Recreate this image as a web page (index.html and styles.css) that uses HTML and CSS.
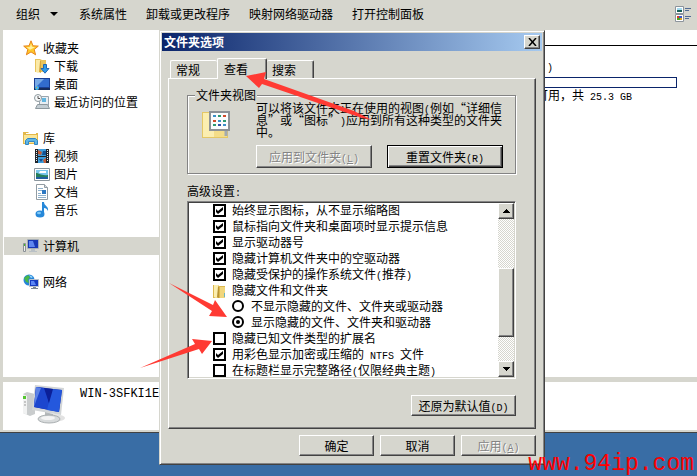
FILE: index.html
```html
<!DOCTYPE html>
<html lang="zh-CN">
<head>
<meta charset="utf-8">
<title>文件夹选项</title>
<link rel="stylesheet" href="styles.css">
</head>
<body>
<main class="explorer">
  <header class="toolbar">
    <button class="tool" type="button">组织 <span class="caret"></span></button>
    <button class="tool" type="button">系统属性</button>
    <button class="tool" type="button">卸载或更改程序</button>
    <button class="tool" type="button">映射网络驱动器</button>
    <button class="tool" type="button">打开控制面板</button>
    <button class="tool view-mode" type="button" aria-label="更改视图">
      <svg width="16" height="16" viewBox="0 0 16 16"><path fill="#fff" stroke="#8c949c" d="M.5.5h8v7h-8zM.5 8.5h8v7h-8z"/><path fill="#a5dcf0" d="M2 2h5v2H2z"/><path fill="#18605a" d="M2 4h5v2H2z"/><path fill="#d83a28" d="M2 10h2v2H2z"/><path fill="#3b55c4" d="M4 10h3v2H4z"/><path fill="#4ea51e" d="M2 12h3v2H2z"/><path fill="#e2a51c" d="M5 12h2v2H5z"/><path stroke="#526b94" d="M10 2.500h6M10 4.500h4M10 10.500h6M10 12.500h4"/></svg>
    </button>
  </header>
  <div class="panes">
    <nav class="tree">
      <a class="node root" href="#"><svg width="16" height="16" viewBox="0 0 16 16"><path fill="#ffc929" stroke="#e8851d" d="M8 .8l2 5 5.300.300-4.100 3.400 1.400 5.300L8 11.900l-4.600 2.900 1.400-5.300L.7 6.100 6 5.800z"/><path fill="#fff0a0" d="M8 3.500l1 3.300 3 .4-5 2.500-3.500-2.500L7 7z"/></svg>收藏夹</a>
      <a class="node" href="#"><svg width="16" height="16" viewBox="0 0 16 16"><path fill="#e9c45c" d="M1 1h5l2 1h4v12H1z"/><path fill="#fbeaa8" d="M2 2h4v12l-2 1-2-1z"/><path fill="#d6a63b" d="M6 3h1v12l-2-1z"/><path fill="#2f9be8" stroke="#1d66b5" d="M9.500 6.500h3v4h2.500L11 15.200 7 10.500h2.500z"/></svg>下载</a>
      <a class="node" href="#"><svg width="16" height="16" viewBox="0 0 16 16"><path fill="#1b3f94" d="M0 2h16v12H0z"/><path fill="#326cce" d="M1 3h14v8H1z"/><path fill="#78aae6" d="M1 3h9L2 11H1z"/><path fill="#162c5c" d="M0 12h16v2H0z"/><circle cx="3" cy="12" r="2" fill="#43b9e8"/><path fill="#f3933a" d="M2 11h1v1H2z"/></svg>桌面</a>
      <a class="node" href="#"><svg width="16" height="16" viewBox="0 0 16 16"><path fill="#e8eef3" stroke="#9aa5ae" d="M5.500 2.500h9v9h-9z"/><path fill="#63b6df" d="M8 4h4v4H8z"/><path fill="#c3cdd3" stroke="#8d989e" d="M3.500 10.500h10l2 4h-14z"/><circle cx="4" cy="4" r="3.500" fill="#f7f9fa" stroke="#8d989e"/><path stroke="#555" fill="none" d="M4 2v2.500h2"/></svg>最近访问的位置</a>
      <a class="node root section" href="#"><svg width="16" height="16" viewBox="0 0 16 16"><path fill="#e3b84a" d="M0 2h5l1 1h9v11H0z"/><path fill="#f9e597" d="M1 5h13v8H1z"/><path fill="#fff" d="M3 3h10v1H3z"/><path fill="#5eb5e5" stroke="#3086c4" d="M2.500 14.500v-4l2-2h8l2 2v4h-3v-3h-6v3z"/></svg>库</a>
      <a class="node" href="#"><svg width="16" height="16" viewBox="0 0 16 16"><path fill="#20252b" d="M1 1h14v14H1z"/><path fill="#3d9ddc" d="M4 1h8v7H4zM4 9h8v6H4z"/><path fill="#c25c37" d="M4 2l4 2-1 3-3-1zM12 10l-3 2 1 3h2z"/><path fill="#145292" d="M9 3h3v4H8zM5 11h4l-2 3z"/><path stroke="#eee" stroke-dasharray="1 1" d="M2.500 2v12M13.500 2v12"/></svg>视频</a>
      <a class="node" href="#"><svg width="16" height="16" viewBox="0 0 16 16"><path fill="#fff" stroke="#8b969e" d="M.5 2.500h15v12H.5z"/><path fill="#79c6ec" d="M2 4h12v9H2z"/><path fill="#fff" d="M6 5h6v2H5z"/><path fill="#267f5b" d="M2 7c3 0 5 3 12 2v4H2z"/><path fill="#1f5fa0" d="M2 11h12v2H2z"/></svg>图片</a>
      <a class="node" href="#"><svg width="16" height="16" viewBox="0 0 16 16"><path fill="#fff" stroke="#929ca3" d="M2.500.5h8l3 3v12h-11z"/><path fill="#d5dce1" stroke="#929ca3" d="M10.500.5v3h3"/><path stroke="#8fb1cc" d="M4 4.500h5M4 6.500h4M4 9.500h3M4 11.500h8M4 13.500h8"/><path fill="#2d78c2" d="M8 6h4v4H8z"/></svg>文档</a>
      <a class="node" href="#"><svg width="16" height="16" viewBox="0 0 16 16"><path fill="#2688d9" d="M8 0h2c0 4 5 4 4 9-1-2-2-3-4-3v6H8z"/><ellipse cx="6" cy="12" rx="4.500" ry="3.500" fill="#2688d9"/><ellipse cx="5" cy="11" rx="2" ry="1.200" fill="#80c9f6"/></svg>音乐</a>
      <a class="node root section selected" href="#"><svg width="16" height="16" viewBox="0 0 16 16"><path fill="#eee" stroke="#8a9196" d="M.5 5.500h2v8h-2z"/><path fill="#4ab92b" d="M1 6h1v2H1z"/><path fill="#dfe4e8" stroke="#a5adb5" d="M4.500 1.500h11v9h-11z"/><path fill="#1737b5" d="M5 2h10v8H5z"/><path fill="#5e86ef" d="M6 3h4l2 6H6z"/><path fill="#b9c0c5" d="M8 11h4v2h2v1H6v-1h2z"/></svg>计算机</a>
      <a class="node root section" href="#"><svg width="16" height="16" viewBox="0 0 16 16"><circle cx="6" cy="6" r="5.500" fill="#2584da"/><path fill="#49b848" d="M1 4l4-3 2 2-2 3 1 3-3-1z"/><path fill="#a5e1fa" d="M6 1l4 2-2 1z"/><path fill="#163bc0" stroke="#b9c2cc" d="M6.500 5.500h9v7h-9z"/><path fill="#5b87f5" d="M8 7h3l2 4H8z"/><path fill="#7b8791" d="M10 13h3v1h2v1H8v-1h2z"/></svg>网络</a>
    </nav>
    <section class="drives">
      <div class="drive-name"><span class="latin">)</span></div>
      <div class="capacity"></div>
      <div class="free">可用，共<span class="latin"> 25.3 GB</span></div>
    </section>
  </div>
  <footer class="details">
    <svg width="44" height="40" viewBox="0 0 44 40"><ellipse cx="30" cy="34" rx="13" ry="4" fill="#e2e2e2"/><path fill="#c9cccd" d="M1 10l4-2 8 2v20l-5 2-7-3z"/><path fill="#f1f2f2" d="M1 10l4 2v19l-4-2z"/><path fill="#54c62f" d="M1 12h3v3H1z"/><path stroke="#999" d="M2 18h2M2 21h2"/><path fill="#d2d5d7" d="M13 1l29 3-3 27-29-5z"/><path fill="#0d24a5" d="M14 3l26 3-3 22-25-5z"/><path fill="#1c46cf" d="M14 3l10 1 4 22-16-3z"/><path fill="#5c82e6" d="M14 3l5 1-5 13-2 6z"/><path fill="#2458dd" d="M30 5l10 1-3 22-12-2z"/><path fill="#0b1f98" d="M22 4l9 1-4 14z"/><path fill="#b5b9bb" d="M23 28l8 2v4h-8z"/><ellipse cx="27" cy="35" rx="11" ry="4" fill="#d8dbdc" stroke="#aaafb1"/><ellipse cx="26" cy="34" rx="7" ry="2" fill="#f4f4f4"/></svg>
    <span class="host">WIN-3SFKI1EG</span>
  </footer>
</main>

<div class="dialog" role="dialog" aria-labelledby="dialog-title">
  <div class="titlebar">
    <span id="dialog-title">文件夹选项</span>
    <button class="close" type="button" aria-label="关闭"><svg width="9" height="8" viewBox="0 0 9 8"><path stroke="#000" stroke-width="1.500" d="M1 0l7 8M8 0L1 8"/></svg></button>
  </div>
  <div class="tabs" role="tablist">
    <button class="tab" type="button" role="tab">常规</button>
    <button class="tab active" type="button" role="tab" aria-selected="true">查看</button>
    <button class="tab" type="button" role="tab">搜索</button>
  </div>
  <div class="page">
    <fieldset class="folder-views">
      <legend>文件夹视图</legend>
      <div class="views-row">
        <svg width="30" height="30" viewBox="0 0 30 30"><path fill="#e4c765" d="M0 2h10l2 1h14v25H0z"/><path fill="#fbeeb0" d="M1 3h12v24H1z"/><path fill="#f4dd88" d="M12 4h13v23H12z"/><path fill="#fafcfd" stroke="#8c9196" stroke-width="2" d="M8 2h19v18H8z"/><path stroke="#3c8fc7" stroke-width="2" d="M11 6h3M16 11h3M21 15h3"/><path stroke="#cf4b2a" stroke-width="2" d="M21 6h3M11 11h3"/><path stroke="#2e9b72" stroke-width="2" d="M16 6h3M11 15h3M21 11h3"/><path stroke="#3450a3" stroke-width="2" d="M16 15h3"/><path stroke="#a3aab0" stroke-width="3" d="M24 21v5"/></svg>
        <div class="views-body">
          <p>可以将该文件夹正在使用的视图<span class="latin">(</span>例如“详细信<br>息”或“图标”<span class="latin">)</span>应用到所有这种类型的文件夹<br>中。</p>
          <div class="views-actions">
            <button class="btn tall" type="button" disabled>应用到文件夹<span class="latin">(<u>L</u>)</span></button>
            <button class="btn tall default" type="button">重置文件夹<span class="latin">(R)</span></button>
          </div>
        </div>
      </div>
    </fieldset>
    <div class="list-label" id="advanced">高级设置<span class="latin">:</span></div>
    <div class="listbox" role="group" aria-labelledby="advanced">
      <div class="rows">
        <label class="row"><input type="checkbox" checked><span>始终显示图标，从不显示缩略图</span></label>
        <label class="row"><input type="checkbox" checked><span>鼠标指向文件夹和桌面项时显示提示信息</span></label>
        <label class="row"><input type="checkbox" checked><span>显示驱动器号</span></label>
        <label class="row"><input type="checkbox" checked><span>隐藏计算机文件夹中的空驱动器</span></label>
        <label class="row"><input type="checkbox" checked><span>隐藏受保护的操作系统文件<span class="latin">(</span>推荐<span class="latin">)</span></span></label>
        <div class="row"><svg width="13" height="15" viewBox="0 0 13 15"><path fill="#dcb84f" d="M0 1h5l1 1h6v12H0z"/><path fill="#fbeeb0" d="M1 1h4v12l-2 1-2-1z"/><path fill="#f1d67c" d="M7 3h5v11H7z"/><path fill="#b99434" d="M5 3h1v11l-2-1z"/><path fill="#6eb4bd" d="M11 9h1v4h-1z"/></svg><span>隐藏文件和文件夹</span></div>
        <label class="row child"><input type="radio" name="hidden"><span>不显示隐藏的文件、文件夹或驱动器</span></label>
        <label class="row child"><input type="radio" name="hidden" checked><span>显示隐藏的文件、文件夹和驱动器</span></label>
        <label class="row"><input type="checkbox"><span>隐藏已知文件类型的扩展名</span></label>
        <label class="row"><input type="checkbox" checked><span>用彩色显示加密或压缩的<span class="latin"> NTFS </span>文件</span></label>
        <label class="row"><input type="checkbox"><span>在标题栏显示完整路径<span class="latin">(</span>仅限经典主题<span class="latin">)</span></span></label>
      </div>
      <div class="scrollbar">
        <button class="arrow" type="button" aria-label="向上"><svg width="7" height="4" viewBox="0 0 7 4"><path d="M3 0h1v1h1v1h1v1h1v1H0V3h1V2h1V1h1z"/></svg></button>
        <div class="track"><div class="thumb"></div></div>
        <button class="arrow" type="button" aria-label="向下"><svg width="7" height="4" viewBox="0 0 7 4"><path d="M0 0h7v1H6v1H5v1H4v1H3V3H2V2H1V1H0z"/></svg></button>
      </div>
    </div>
    <button class="btn restore" type="button">还原为默认值<span class="latin">(D)</span></button>
  </div>
  <div class="actions">
    <button class="btn" type="button">确定</button>
    <button class="btn" type="button">取消</button>
    <button class="btn" type="button" disabled>应用<span class="latin">(<u>A</u>)</span></button>
  </div>
</div>

<svg class="pointers" width="400" height="400" viewBox="0 0 400 400" aria-hidden="true"><path d="M246 76l20-4-2 7 90 32 18 9-10-2L262 84l-3 4zM169 283l44 22 2-5 12 17-18-1 3-5zM140 368l55-24-3-5 20 2-10 13-3-5z"/></svg>
<div class="watermark">www.94ip.com</div>
</body>
</html>
```

FILE: styles.css
```css
:root {
  --face: #d6d6ce;
  --shade: #848484;
  --dark: #424242;
}

* {
  box-sizing: border-box;
}

body {
  margin: 0;
  min-height: 100vh;
  overflow: hidden;
  background: #396da5;
  color: #000;
  font: 12px/14px "Noto Sans CJK SC", sans-serif;
  text-spacing-trim: space-all;
}

button {
  padding: 0;
  border: 0;
  background: none;
  color: inherit;
  font: inherit;
  white-space: nowrap;
}

svg {
  display: block;
  flex: none;
}

input {
  appearance: none;
  flex: none;
  margin: 0;
}

.latin {
  font-family: "Liberation Mono", monospace;
  font-size: 10px;
  line-height: 0;
  white-space: pre;
}

/* Explorer window */
.explorer {
  padding: 0 0 2px 3px;
  border-bottom: 1px solid var(--dark);
  background: var(--face);
}

.toolbar {
  display: flex;
  align-items: center;
  gap: 19px;
  height: 30px;
  padding: 0 6px 2px 13px;
}

.tool {
  display: flex;
  align-items: center;
  gap: 10px;
}

.tool:first-child {
  margin-right: 2px;
}

.view-mode {
  margin-left: auto;
}

.caret {
  border: 4px solid transparent;
  border-top-color: #000;
  border-bottom: 0;
}

.panes {
  display: flex;
  gap: 5px;
  height: 347px;
}

.tree {
  width: 156px;
  padding-top: 9px;
  background: #fff;
}

.node {
  display: flex;
  align-items: center;
  gap: 4px;
  height: 18px;
  margin-left: 1px;
  padding-left: 30px;
  color: inherit;
  text-decoration: none;
}

.root {
  padding-left: 19px;
}

.section {
  margin-top: 18px;
}

.selected {
  background: var(--face);
}

.drives {
  flex: 1;
  padding-top: 15px;
  background: #fff;
}

.drive-name {
  height: 32px;
  padding: 13px 0 0 383px;
  border-top: 1px solid #000;
}

.capacity {
  height: 11px;
  margin-right: 20px;
  border: 1px solid #0a246a;
}

.free {
  padding-left: 372px;
}

.details {
  display: flex;
  gap: 14px;
  margin-top: 5px;
  height: 48px;
  padding: 2px 0 0 19px;
  background: #fff;
}

.host {
  padding-top: 3px;
  font: 12px/14px "Liberation Mono", monospace;
}

/* Folder options dialog */
.dialog {
  position: absolute;
  top: 30px;
  left: 159px;
  width: 386px;
  padding: 2px;
  border: 1px solid;
  border-color: var(--face) var(--dark) var(--dark) var(--face);
  background: var(--face);
  box-shadow: inset 1px 1px #fff, inset -1px -1px var(--shade);
}

.titlebar {
  display: flex;
  align-items: center;
  justify-content: space-between;
  height: 18px;
  padding: 0 2px;
  background: linear-gradient(90deg, #0a246a, #a6caf0);
  color: #fff;
  font-weight: bold;
}

.btn,
.close,
.arrow,
.thumb {
  border: 1px solid;
  border-color: #fff var(--dark) var(--dark) #fff;
  background: var(--face);
  box-shadow: inset -1px -1px var(--shade);
}

.close,
.arrow {
  display: grid;
  place-items: center;
}

.close {
  width: 16px;
  height: 14px;
}

.tabs {
  display: flex;
  align-items: flex-end;
  height: 20px;
  margin: 7px 6px 0;
  padding-left: 2px;
}

.tab {
  width: 47px;
  height: 18px;
  padding-right: 12px;
  border: 1px solid #fff;
  border-width: 1px 0 0 1px;
  border-radius: 2px 2px 0 0;
}

.tab:last-child {
  border-left: 0;
  border-right: 1px solid var(--dark);
  box-shadow: inset -1px 0 var(--shade);
}

.active {
  position: relative;
  width: 50px;
  height: 21px;
  margin-bottom: -1px;
  border-right: 1px solid var(--dark);
  background: var(--face);
  box-shadow: inset -1px 0 var(--shade);
}

.page {
  display: flex;
  flex-direction: column;
  margin: 0 6px;
  padding: 9px 19px 12px 18px;
  border: 1px solid;
  border-color: #fff var(--dark) var(--dark) #fff;
  box-shadow: inset -1px -1px var(--shade);
}

.folder-views {
  min-width: 0;
  margin: 0;
  padding: 0 12px 5px 14px;
  border: 1px solid var(--shade);
  box-shadow: 1px 1px #fff, inset 1px 1px #fff;
}

legend {
  margin-left: -7px;
  padding: 0 1px;
  background: var(--face);
}

.views-row {
  display: flex;
  gap: 24px;
}

.views-row > svg {
  margin-top: 8px;
}

.views-body p {
  margin: 0 0 7px;
  line-height: 12px;
  white-space: nowrap;
}

.views-actions {
  display: flex;
  gap: 15px;
}

.btn {
  width: 75px;
  height: 21px;
}

.btn:disabled {
  color: var(--shade);
  text-shadow: 1px 1px #fff;
}

.tall {
  width: 116px;
  height: 23px;
}

.default {
  border-color: #000;
  box-shadow: inset 1px 1px #fff, inset -1px -1px var(--dark), inset -2px -2px var(--shade);
}

.list-label {
  margin: 10px 0 3px;
}

.listbox {
  display: flex;
  height: 178px;
  padding: 1px;
  border: 1px solid;
  border-color: var(--shade) #fff #fff var(--shade);
  background: #fff;
  box-shadow: inset 1px 1px var(--dark), inset -1px -1px var(--face);
}

.rows {
  flex: 1;
  padding-left: 24px;
}

.row {
  display: flex;
  gap: 6px;
  height: 16px;
  padding-top: 1px;
  line-height: 12px;
  white-space: nowrap;
}

.child {
  padding-left: 19px;
}

.row input {
  width: 13px;
  height: 13px;
  border: 2px solid #000;
}

.row input[type="radio"] {
  width: 12px;
  height: 12px;
  margin-right: 1px;
  border-radius: 50%;
}

.row input:checked::before {
  content: "";
  display: block;
  width: 7px;
  height: 7px;
  margin: 1px;
  background: #000;
  clip-path: polygon(0 2px, 2px 4px, 7px 0, 7px 3px, 2px 7px, 0 5px);
}

.row input[type="radio"]:checked::before {
  width: 4px;
  height: 4px;
  margin: 2px;
  border-radius: 50%;
  clip-path: none;
}

.scrollbar {
  display: flex;
  flex-direction: column;
  width: 16px;
}

.arrow {
  width: 16px;
  height: 16px;
}

.track {
  flex: 1;
  padding-top: 49px;
  background: repeating-conic-gradient(var(--face) 0 25%, #fff 0 50%) 0 0 / 2px 2px;
}

.thumb {
  height: 69px;
}

.restore {
  align-self: flex-end;
  width: 105px;
  margin-top: 16px;
}

.actions {
  display: flex;
  justify-content: flex-end;
  gap: 6px;
  padding: 6px;
}

/* Annotations over the windows */
.pointers {
  position: absolute;
  top: 0;
  left: 0;
  fill: #ff3a33;
  pointer-events: none;
}

.watermark {
  position: absolute;
  right: 3px;
  bottom: 0;
  color: #f00;
  font: 23px/24px "Liberation Mono", monospace;
}
```
